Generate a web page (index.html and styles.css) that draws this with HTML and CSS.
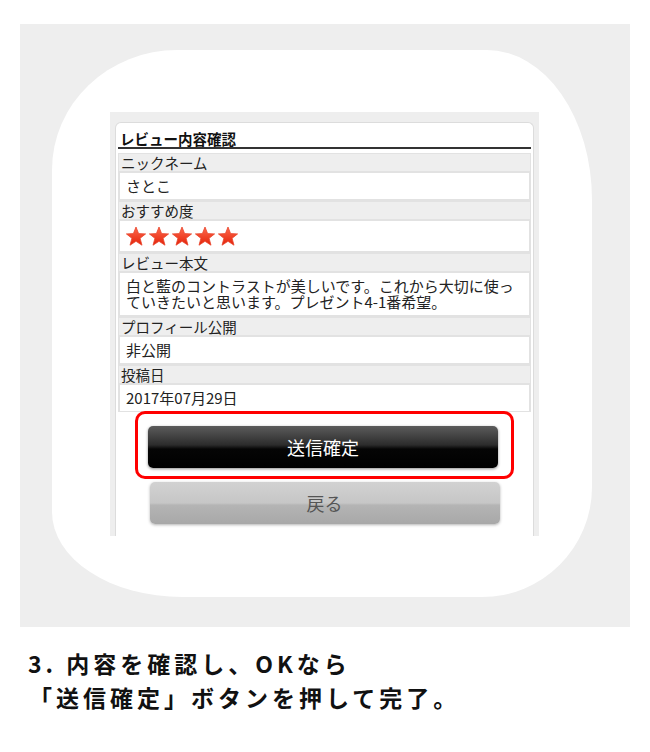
FILE: index.html
```html
<!DOCTYPE html>
<html lang="ja">

<head>
    <meta charset="UTF-8">
    <meta name="viewport" content="width=device-width, initial-scale=1.0">
    <title>レビュー投稿の流れ</title>
    <link rel="stylesheet" href="styles.css">
</head>

<body>
    <!-- スクリーンショット部分 -->
    <div class="panel">
        <div class="blob">
            <div class="screen">
                <div class="card">
                    <div class="card-title">レビュー内容確認</div>

                    <div class="row label">ニックネーム</div>
                    <div class="row value">さとこ</div>

                    <div class="row label">おすすめ度</div>
                    <div class="row value stars">
                        <svg width="116" height="22" viewBox="0 0 116 22">
                            <defs>
                                <linearGradient id="starFill" x1="0" y1="0" x2="0" y2="1">
                                    <stop offset="0" stop-color="#ff6a4d" />
                                    <stop offset="1" stop-color="#e3230a" />
                                </linearGradient>
                                <path id="star" d="M10 1 L12.6 7.6 L19.6 7.9 L14.1 12.3 L16 19.2 L10 15.3 L4 19.2 L5.9 12.3 L0.4 7.9 L7.4 7.6 Z" />
                            </defs>
                            <use href="#star" x="1" y="1" fill="url(#starFill)" stroke="#e8452c" stroke-width="0.8" />
                            <use href="#star" x="24" y="1" fill="url(#starFill)" stroke="#e8452c" stroke-width="0.8" />
                            <use href="#star" x="47" y="1" fill="url(#starFill)" stroke="#e8452c" stroke-width="0.8" />
                            <use href="#star" x="70" y="1" fill="url(#starFill)" stroke="#e8452c" stroke-width="0.8" />
                            <use href="#star" x="93" y="1" fill="url(#starFill)" stroke="#e8452c" stroke-width="0.8" />
                        </svg>
                    </div>

                    <div class="row label">レビュー本文</div>
                    <div class="row value">白と藍のコントラストが美しいです。これから大切に使っていきたいと思います。プレゼント4-1番希望。</div>

                    <div class="row label">プロフィール公開</div>
                    <div class="row value">非公開</div>

                    <div class="row label">投稿日</div>
                    <div class="row value">2017年07月29日</div>

                    <div class="highlight">
                        <button class="btn btn-submit">送信確定</button>
                    </div>
                    <button class="btn btn-back">戻る</button>
                </div>
            </div>
        </div>
    </div>

    <!-- 説明文 -->
    <p class="caption">
        <span class="line">3. 内容を確認し、OKなら</span>
        <span class="line line-bracket">「送信確定」ボタンを押して完了。</span>
    </p>
</body>

</html>
```

FILE: styles.css
```css
* {
    margin: 0;
    padding: 0;
    box-sizing: border-box;
}

body {
    background-color: #ffffff;
    font-family: "Noto Sans CJK JP", "Noto Sans", sans-serif;
    color: #222222;
}

/* 背景パネル */
.panel {
    margin: 24px 20px 0;
    height: 603px;
    padding: 26px 38px 0 32px;
    background-color: #eeeeee;
}

.blob {
    height: 547px;
    padding: 62px 0 0 58px;
    background-color: #ffffff;
    border-radius: 125px 105px 110px 130px / 120px 150px 110px 85px;
}

/* スマホ画面 */
.screen {
    width: 429px;
    height: 424px;
    padding: 10px 5px 0 5px;
    background-color: #eeeeee;
    overflow: hidden;
}

.card {
    height: 100%;
    padding: 0 2px;
    background-color: #ffffff;
    border: 1px solid #dcdcdc;
    border-bottom: none;
    border-radius: 6px 6px 0 0;
}

.card-title {
    padding: 7px 0 0 2px;
    margin-bottom: 4px;
    font-size: 14.5px;
    line-height: 17px;
    font-weight: bold;
    color: #111111;
    border-bottom: 2px solid #333333;
}

.row {
    border: 1px solid #e2e2e2;
}

.label {
    padding: 0 2px;
    font-size: 14.5px;
    line-height: 17px;
    background-color: #eeeeee;
}

.value {
    padding: 5px 6px;
    font-size: 15px;
    line-height: 16px;
    border-width: 1px 2px;
}

.value + .label {
    border-top-width: 2px;
}

.stars {
    height: 32px;
    padding: 4px 5px 0;
}

.stars svg {
    display: block;
}

/* ボタン */
.highlight {
    width: 379px;
    margin: -1px auto 0;
    padding: 12px 13px 8px 10px;
    border: 3px solid #ff0000;
    border-radius: 10px;
}

.btn {
    display: block;
    width: 350px;
    height: 42px;
    font-family: inherit;
    font-size: 18px;
    border: none;
    border-radius: 5px;
    cursor: pointer;
}

.btn-submit {
    color: #ffffff;
    background: linear-gradient(#5c5c5c, #2c2c2c 45%, #050505 55%, #000000);
    box-shadow: 0 1px 3px rgba(0, 0, 0, 0.45);
}

.btn-back {
    margin: 3px auto 0;
    color: #555555;
    background: linear-gradient(#d2d2d2, #c6c6c6 50%, #b4b4b4 55%, #a8a8a8);
    box-shadow: 0 1px 3px rgba(0, 0, 0, 0.3);
}

/* 説明文 */
.caption {
    padding: 19px 0 0 28px;
    font-size: 23px;
    font-weight: bold;
    line-height: 34px;
    letter-spacing: 4px;
    color: #111111;
}

.line {
    display: block;
}

.line-bracket {
    margin-left: 1px;
}
```
